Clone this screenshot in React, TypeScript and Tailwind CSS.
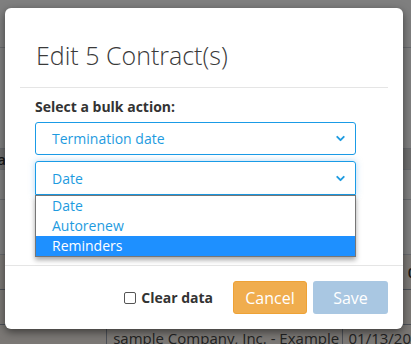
import { ChevronDown } from "lucide-react"

const rows = [
  { h: "h-[48px]", cls: "bg-white border-b border-gray-300", left: "", right: "" },
  { h: "h-[100px]", cls: "bg-white", left: "", right: "" },
  { h: "h-[22px]", cls: "bg-[#dcdcdc] border-y border-gray-300", left: "Va", right: "e" },
  { h: "h-[30px]", cls: "bg-white border-b border-gray-300", left: "", right: "" },
  { h: "h-[55px]", cls: "bg-white border-b border-gray-300", left: "", right: "" },
  { h: "h-[35px]", cls: "bg-[#f6f1ea] border-b border-gray-400", left: "", right: "02" },
  { h: "h-[35px]", cls: "bg-[#f6f1ea] border-b border-gray-400", left: "", right: "0" },
]

export default function App() {
  return (
    <div className="relative w-[411px] h-[344px] overflow-hidden bg-white font-['Open_Sans',sans-serif]">
      {/* Page behind the modal */}
      <div className="flex flex-col text-[15px] text-[#333]">
        {rows.map((r, i) => (
          <div key={i} className={`${r.h} ${r.cls} flex items-center justify-between leading-none`}>
            <span className="-ml-[12px] font-semibold">{r.left}</span>
            <span className="-mr-[14px] font-semibold">{r.right}</span>
          </div>
        ))}
        <div className="h-[40px] bg-[#f6f1ea] flex text-[15px] text-[#444] leading-none">
          <div className="w-[108px] border-r border-gray-400" />
          <div className="w-[237px] border-r border-gray-400 pl-[6px] pt-[6px]">sample Company, Inc. - Example</div>
          <div className="pl-[6px] pt-[6px]">01/13/20</div>
        </div>
      </div>

      {/* Backdrop */}
      <div className="absolute inset-0 bg-black/50" />

      {/* Modal */}
      <div className="absolute left-[5px] top-[8px] w-[398px] bg-white rounded-[6px] shadow-[0_3px_9px_rgba(0,0,0,0.5)] flex flex-col text-[#333]">
        <div className="mx-[15px] pt-[33px] pb-[18px] pl-[16px] border-b border-[#e5e5e5]">
          <h2 className="text-[25px] font-light leading-[28px] text-[#3a3a3a]">Edit 5 Contract(s)</h2>
        </div>

        <div className="pl-[30px] pr-[47px] pt-[9px] h-[177px] flex flex-col">
          <label className="text-[14px] font-bold leading-[19px] text-[#333]">Select a bulk action:</label>
          <div className="mt-[6px] h-[33px] border border-[#1a9be6] rounded-[3px] flex items-center justify-between pl-[16px] pr-[8px] text-[14px] text-[#1e9be0]">
            <span>Termination date</span>
            <ChevronDown className="w-[13px] h-[13px]" strokeWidth={3.5} />
          </div>
          <div className="relative mt-[6px]">
            <div className="h-[34px] border border-[#1a9be6] rounded-t-[3px] shadow-[0_0_6px_rgba(102,175,233,0.5)] flex items-center justify-between pl-[16px] pr-[8px] text-[14px] text-[#1e9be0]">
              <span>Date</span>
              <ChevronDown className="w-[13px] h-[13px]" strokeWidth={3.5} />
            </div>
            <ul className="absolute left-0 right-0 top-[34px] bg-white border border-[#767676] shadow-[0_3px_5px_rgba(0,0,0,0.35)] text-[14px] leading-[20px] z-10">
              <li className="pl-[16px] text-[#1e9be0]">Date</li>
              <li className="pl-[16px] text-[#1e9be0]">Autorenew</li>
              <li className="pl-[16px] bg-[#1e90ff] text-white">Reminders</li>
            </ul>
          </div>
        </div>

        <div className="border-t border-[#e5e5e5] flex items-center justify-end gap-[6px] px-[15px] pt-[15px] pb-[15px]">
          <label className="flex items-center gap-[5px] mr-[14px] text-[14px] font-bold text-[#333]">
            <span className="w-[12px] h-[12px] border border-[#555] rounded-[2px] bg-white" />
            Clear data
          </label>
          <button className="w-[74px] h-[33px] bg-[#f0ad4e] border border-[#eea236] rounded-[3px] text-white text-[16px]">Cancel</button>
          <button className="w-[75px] h-[33px] bg-[#a9c7e2] rounded-[3px] text-white text-[16px]">Save</button>
        </div>
      </div>
    </div>
  )
}
